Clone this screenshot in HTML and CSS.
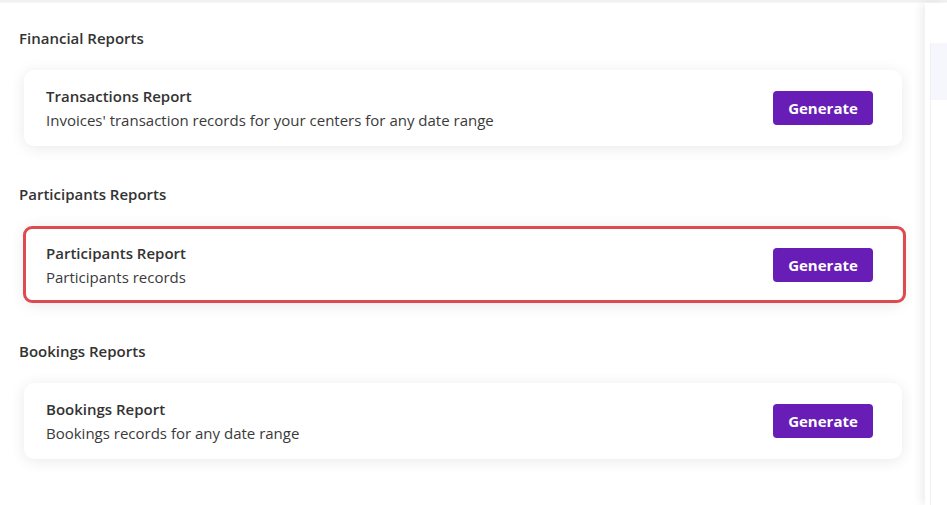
FILE: index.html
```html
<!DOCTYPE html>
<html lang="en">
<head>
<meta charset="utf-8">
<title>Reports</title>
<link rel="stylesheet" href="styles.css">
</head>
<body>
<div class="topline"></div>
<div class="layout">
  <main class="main">
    <section class="section">
      <h2 class="section-title">Financial Reports</h2>
      <div class="card">
        <div class="card-text">
          <div class="card-title">Transactions Report</div>
          <div class="card-desc">Invoices' transaction records for your centers for any date range</div>
        </div>
        <button class="btn">Generate</button>
      </div>
    </section>
    <section class="section">
      <h2 class="section-title">Participants Reports</h2>
      <div class="card card-highlight">
        <div class="card-text">
          <div class="card-title">Participants Report</div>
          <div class="card-desc">Participants records</div>
        </div>
        <button class="btn">Generate</button>
      </div>
    </section>
    <section class="section">
      <h2 class="section-title">Bookings Reports</h2>
      <div class="card">
        <div class="card-text">
          <div class="card-title">Bookings Report</div>
          <div class="card-desc">Bookings records for any date range</div>
        </div>
        <button class="btn">Generate</button>
      </div>
    </section>
  </main>
  <aside class="side">
    <div class="side-card">
      <div class="side-head"></div>
    </div>
  </aside>
</div>
</body>
</html>
```

FILE: styles.css
```css
* { box-sizing: border-box; }
html, body { margin: 0; padding: 0; }
body {
  width: 947px;
  height: 505px;
  overflow: hidden;
  background: #fff;
  font-family: "Open Sans", "Lato", sans-serif;
  color: #333;
}
.topline {
  height: 3px;
  background: #f1f1f3;
  border-bottom: 1px solid #f7f7f8;
}
.layout {
  display: flex;
  height: 502px;
}
.main {
  flex: 1;
  padding: 25px 18px 0 19px;
  display: flex;
  flex-direction: column;
  gap: 38px;
}
.section-title {
  margin: 0 0 22px 0;
  font-size: 15px;
  line-height: 20px;
  font-weight: 600;
  color: #333;
}
.card {
  position: relative;
  margin: 0 5px;
  height: 76px;
  background: #fff;
  border-radius: 10px;
  box-shadow: 0 2px 15px rgba(0, 0, 0, 0.09);
  display: flex;
  align-items: center;
  justify-content: space-between;
  padding: 0 29px 0 22px;
}
.card-highlight {
  height: 77px;
}
.card-highlight::after {
  content: "";
  position: absolute;
  top: 0;
  left: -1px;
  right: -4px;
  bottom: 0;
  border: 3px solid #de4a50;
  border-radius: 9px;
}
.card-text {
  display: flex;
  flex-direction: column;
  gap: 4px;
}
.card-title {
  font-size: 15px;
  line-height: 20px;
  font-weight: 600;
  color: #333;
}
.card-desc {
  font-size: 15px;
  line-height: 20px;
  color: #3a3a3a;
}
.btn {
  width: 100px;
  height: 34px;
  border: none;
  border-radius: 4px;
  background: #671db6;
  color: #fff;
  font-family: inherit;
  font-size: 15px;
  font-weight: 700;
  cursor: pointer;
}
.side {
  width: 22px;
  position: relative;
  background: #fff;
  box-shadow: -4px 0 10px rgba(0, 0, 0, 0.07);
  padding: 40px 0 0 5px;
}
.side-card {
  height: 100%;
  border-left: 1px solid #f0f0f3;
}
.side-head {
  height: 57px;
  background: #f6f6fd;
}
```
